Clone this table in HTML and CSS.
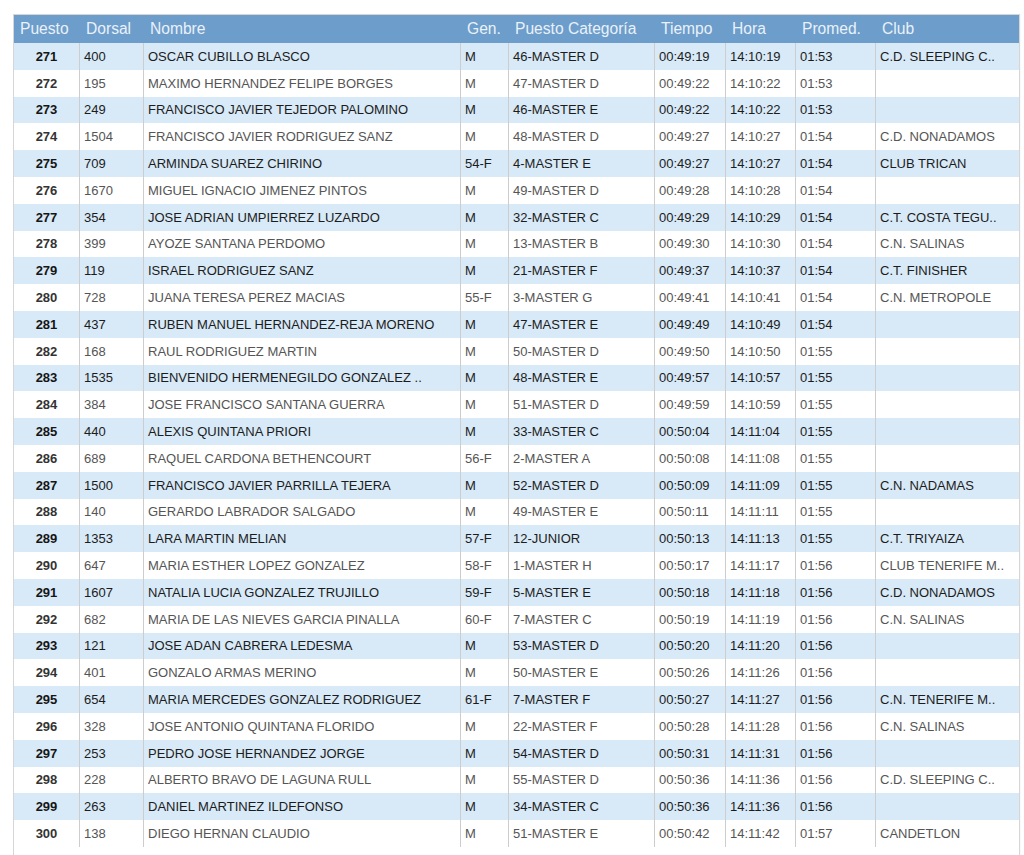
FILE: index.html
```html
<!DOCTYPE html>
<html lang="es">
<head>
<meta charset="utf-8">
<title>Clasificación</title>
<link rel="stylesheet" href="styles.css">
</head>
<body>
<div class="frame">
<table class="results">
<colgroup>
<col class="c-puesto"><col class="c-dorsal"><col class="c-nombre"><col class="c-gen"><col class="c-cat"><col class="c-tiempo"><col class="c-hora"><col class="c-prom"><col class="c-club">
</colgroup>
<thead>
<tr><th>Puesto</th><th>Dorsal</th><th>Nombre</th><th>Gen.</th><th>Puesto Categoría</th><th>Tiempo</th><th>Hora</th><th>Promed.</th><th>Club</th></tr>
</thead>
<tbody>
<tr><td class="pos">271</td><td>400</td><td>OSCAR CUBILLO BLASCO</td><td>M</td><td>46-MASTER D</td><td>00:49:19</td><td>14:10:19</td><td>01:53</td><td>C.D. SLEEPING C..</td></tr>
<tr><td class="pos">272</td><td>195</td><td>MAXIMO HERNANDEZ FELIPE BORGES</td><td>M</td><td>47-MASTER D</td><td>00:49:22</td><td>14:10:22</td><td>01:53</td><td></td></tr>
<tr><td class="pos">273</td><td>249</td><td>FRANCISCO JAVIER TEJEDOR PALOMINO</td><td>M</td><td>46-MASTER E</td><td>00:49:22</td><td>14:10:22</td><td>01:53</td><td></td></tr>
<tr><td class="pos">274</td><td>1504</td><td>FRANCISCO JAVIER RODRIGUEZ SANZ</td><td>M</td><td>48-MASTER D</td><td>00:49:27</td><td>14:10:27</td><td>01:54</td><td>C.D. NONADAMOS</td></tr>
<tr><td class="pos">275</td><td>709</td><td>ARMINDA SUAREZ CHIRINO</td><td>54-F</td><td>4-MASTER E</td><td>00:49:27</td><td>14:10:27</td><td>01:54</td><td>CLUB TRICAN</td></tr>
<tr><td class="pos">276</td><td>1670</td><td>MIGUEL IGNACIO JIMENEZ PINTOS</td><td>M</td><td>49-MASTER D</td><td>00:49:28</td><td>14:10:28</td><td>01:54</td><td></td></tr>
<tr><td class="pos">277</td><td>354</td><td>JOSE ADRIAN UMPIERREZ LUZARDO</td><td>M</td><td>32-MASTER C</td><td>00:49:29</td><td>14:10:29</td><td>01:54</td><td>C.T. COSTA TEGU..</td></tr>
<tr><td class="pos">278</td><td>399</td><td>AYOZE SANTANA PERDOMO</td><td>M</td><td>13-MASTER B</td><td>00:49:30</td><td>14:10:30</td><td>01:54</td><td>C.N. SALINAS</td></tr>
<tr><td class="pos">279</td><td>119</td><td>ISRAEL RODRIGUEZ SANZ</td><td>M</td><td>21-MASTER F</td><td>00:49:37</td><td>14:10:37</td><td>01:54</td><td>C.T. FINISHER</td></tr>
<tr><td class="pos">280</td><td>728</td><td>JUANA TERESA PEREZ MACIAS</td><td>55-F</td><td>3-MASTER G</td><td>00:49:41</td><td>14:10:41</td><td>01:54</td><td>C.N. METROPOLE</td></tr>
<tr><td class="pos">281</td><td>437</td><td>RUBEN MANUEL HERNANDEZ-REJA MORENO</td><td>M</td><td>47-MASTER E</td><td>00:49:49</td><td>14:10:49</td><td>01:54</td><td></td></tr>
<tr><td class="pos">282</td><td>168</td><td>RAUL RODRIGUEZ MARTIN</td><td>M</td><td>50-MASTER D</td><td>00:49:50</td><td>14:10:50</td><td>01:55</td><td></td></tr>
<tr><td class="pos">283</td><td>1535</td><td>BIENVENIDO HERMENEGILDO GONZALEZ ..</td><td>M</td><td>48-MASTER E</td><td>00:49:57</td><td>14:10:57</td><td>01:55</td><td></td></tr>
<tr><td class="pos">284</td><td>384</td><td>JOSE FRANCISCO SANTANA GUERRA</td><td>M</td><td>51-MASTER D</td><td>00:49:59</td><td>14:10:59</td><td>01:55</td><td></td></tr>
<tr><td class="pos">285</td><td>440</td><td>ALEXIS QUINTANA PRIORI</td><td>M</td><td>33-MASTER C</td><td>00:50:04</td><td>14:11:04</td><td>01:55</td><td></td></tr>
<tr><td class="pos">286</td><td>689</td><td>RAQUEL CARDONA BETHENCOURT</td><td>56-F</td><td>2-MASTER A</td><td>00:50:08</td><td>14:11:08</td><td>01:55</td><td></td></tr>
<tr><td class="pos">287</td><td>1500</td><td>FRANCISCO JAVIER PARRILLA TEJERA</td><td>M</td><td>52-MASTER D</td><td>00:50:09</td><td>14:11:09</td><td>01:55</td><td>C.N. NADAMAS</td></tr>
<tr><td class="pos">288</td><td>140</td><td>GERARDO LABRADOR SALGADO</td><td>M</td><td>49-MASTER E</td><td>00:50:11</td><td>14:11:11</td><td>01:55</td><td></td></tr>
<tr><td class="pos">289</td><td>1353</td><td>LARA MARTIN MELIAN</td><td>57-F</td><td>12-JUNIOR</td><td>00:50:13</td><td>14:11:13</td><td>01:55</td><td>C.T. TRIYAIZA</td></tr>
<tr><td class="pos">290</td><td>647</td><td>MARIA ESTHER LOPEZ GONZALEZ</td><td>58-F</td><td>1-MASTER H</td><td>00:50:17</td><td>14:11:17</td><td>01:56</td><td>CLUB TENERIFE M..</td></tr>
<tr><td class="pos">291</td><td>1607</td><td>NATALIA LUCIA GONZALEZ TRUJILLO</td><td>59-F</td><td>5-MASTER E</td><td>00:50:18</td><td>14:11:18</td><td>01:56</td><td>C.D. NONADAMOS</td></tr>
<tr><td class="pos">292</td><td>682</td><td>MARIA DE LAS NIEVES GARCIA PINALLA</td><td>60-F</td><td>7-MASTER C</td><td>00:50:19</td><td>14:11:19</td><td>01:56</td><td>C.N. SALINAS</td></tr>
<tr><td class="pos">293</td><td>121</td><td>JOSE ADAN CABRERA LEDESMA</td><td>M</td><td>53-MASTER D</td><td>00:50:20</td><td>14:11:20</td><td>01:56</td><td></td></tr>
<tr><td class="pos">294</td><td>401</td><td>GONZALO ARMAS MERINO</td><td>M</td><td>50-MASTER E</td><td>00:50:26</td><td>14:11:26</td><td>01:56</td><td></td></tr>
<tr><td class="pos">295</td><td>654</td><td>MARIA MERCEDES GONZALEZ RODRIGUEZ</td><td>61-F</td><td>7-MASTER F</td><td>00:50:27</td><td>14:11:27</td><td>01:56</td><td>C.N. TENERIFE M..</td></tr>
<tr><td class="pos">296</td><td>328</td><td>JOSE ANTONIO QUINTANA FLORIDO</td><td>M</td><td>22-MASTER F</td><td>00:50:28</td><td>14:11:28</td><td>01:56</td><td>C.N. SALINAS</td></tr>
<tr><td class="pos">297</td><td>253</td><td>PEDRO JOSE HERNANDEZ JORGE</td><td>M</td><td>54-MASTER D</td><td>00:50:31</td><td>14:11:31</td><td>01:56</td><td></td></tr>
<tr><td class="pos">298</td><td>228</td><td>ALBERTO BRAVO DE LAGUNA RULL</td><td>M</td><td>55-MASTER D</td><td>00:50:36</td><td>14:11:36</td><td>01:56</td><td>C.D. SLEEPING C..</td></tr>
<tr><td class="pos">299</td><td>263</td><td>DANIEL MARTINEZ ILDEFONSO</td><td>M</td><td>34-MASTER C</td><td>00:50:36</td><td>14:11:36</td><td>01:56</td><td></td></tr>
<tr><td class="pos">300</td><td>138</td><td>DIEGO HERNAN CLAUDIO</td><td>M</td><td>51-MASTER E</td><td>00:50:42</td><td>14:11:42</td><td>01:57</td><td>CANDETLON</td></tr>
</tbody>
</table>
</div>
</body>
</html>
```

FILE: styles.css
```css
html, body {
  background: #ffffff;
}
body {
  margin: 14px 0 0 13px;
  font-family: "Liberation Sans", Arial, sans-serif;
}
.frame {
  width: 1005px;
  border: 1px solid #d6d6d6;
  box-shadow: 0 0 2px rgba(0, 0, 0, 0.08);
  padding-bottom: 8px;
  background: #ffffff;
}
.results {
  width: 1005px;
  table-layout: fixed;
  border-collapse: separate;
  border-spacing: 0;
}
.c-puesto { width: 65px; }
.c-dorsal { width: 64px; }
.c-nombre { width: 317px; }
.c-gen { width: 48px; }
.c-cat { width: 146px; }
.c-tiempo { width: 71px; }
.c-hora { width: 70px; }
.c-prom { width: 80px; }
.c-club { width: 144px; }

.results th {
  height: 28px;
  padding: 0 0 0 6px;
  background: #6c9dcb;
  color: #eaf1f9;
  font-size: 15.6px;
  font-weight: normal;
  text-align: left;
  white-space: nowrap;
  overflow: hidden;
}
.results th + th {
  border-left: 1px solid #6c9dcb;
}
.results td {
  height: 26.8px;
  padding: 0 0 0 4px;
  font-size: 13px;
  color: #555555;
  white-space: nowrap;
  overflow: hidden;
}
.results td + td {
  border-left: 1px solid #cdcdcd;
}
.results tbody tr:nth-child(odd) td {
  background: #d8e9f7;
  color: #1c1c1c;
}
.results td.pos {
  padding: 0;
  text-align: center;
  font-weight: bold;
  color: #333333;
}
.results tbody tr:nth-child(odd) td.pos {
  color: #151515;
}
```
